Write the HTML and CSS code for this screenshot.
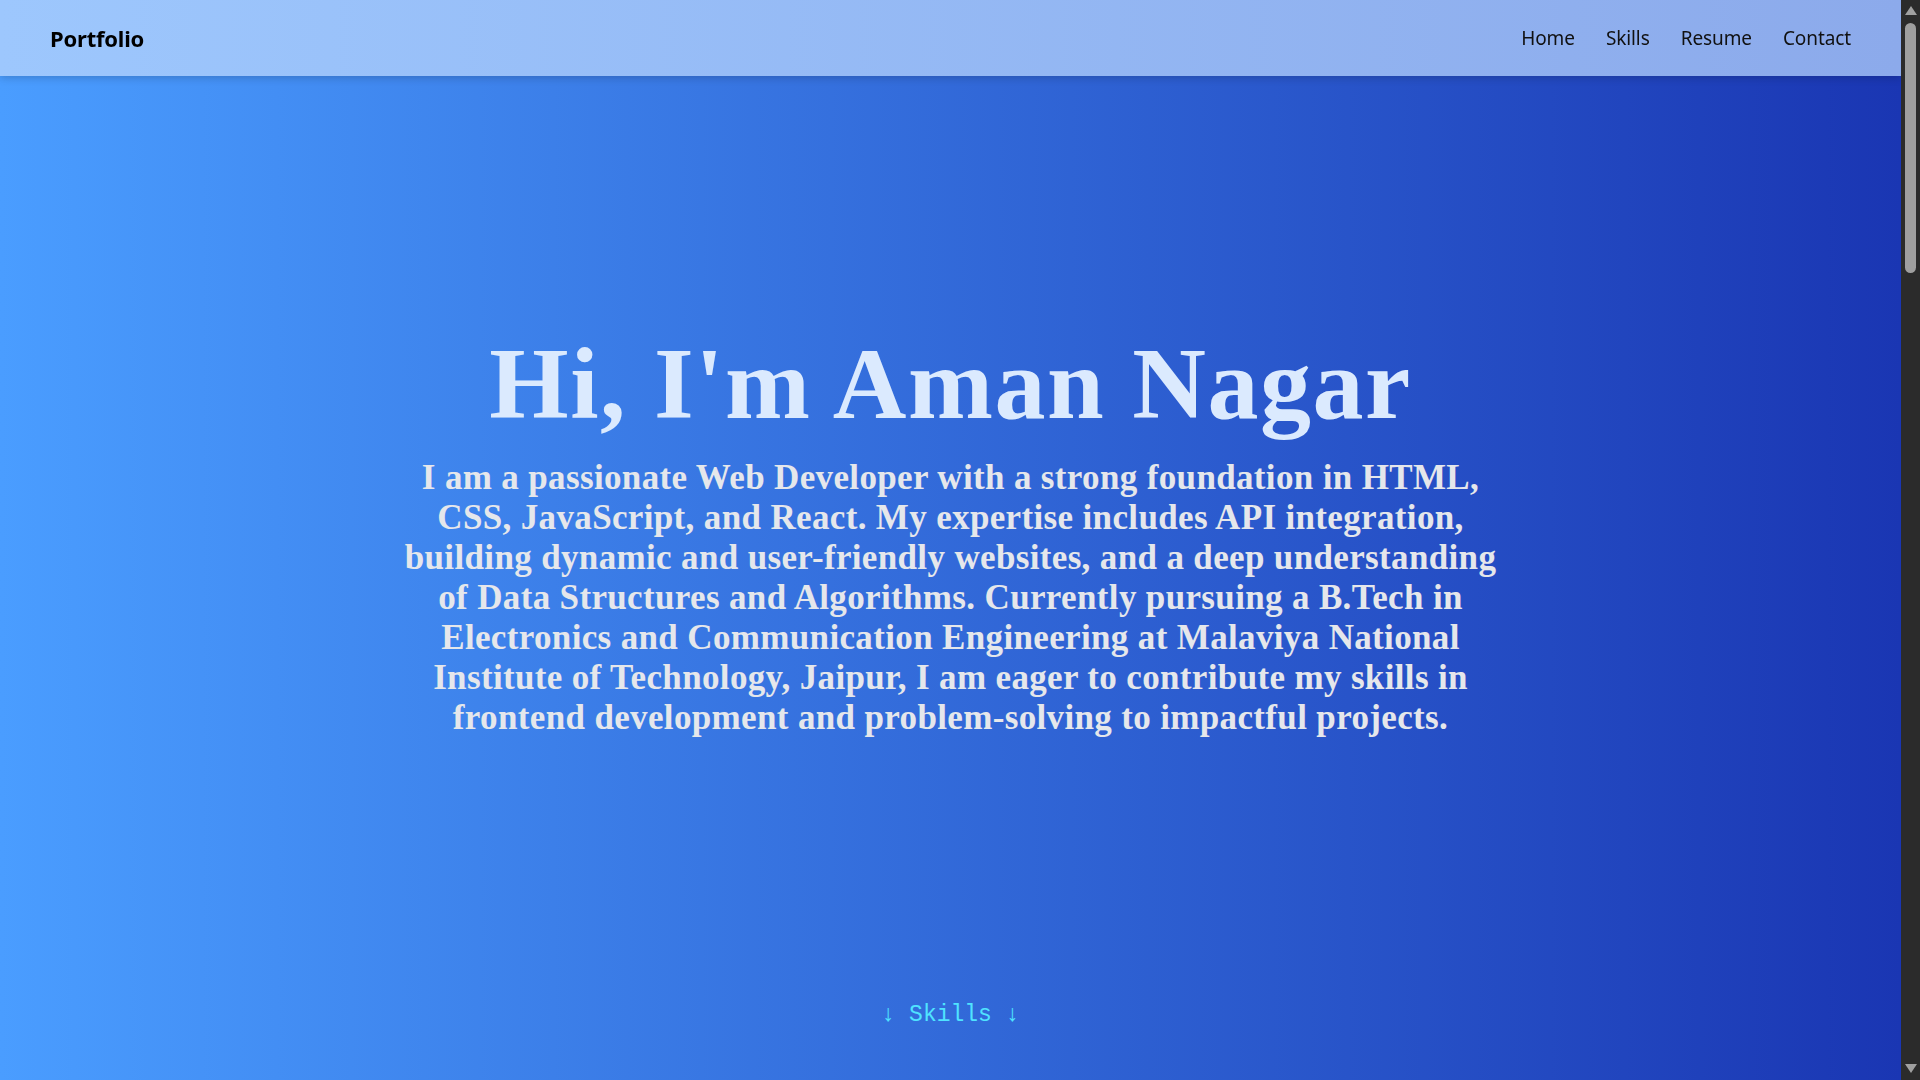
FILE: index.html
```html
<!DOCTYPE html>
<html lang="en">
<head>
<meta charset="utf-8">
<title>Portfolio</title>
<link rel="stylesheet" href="styles.css">
</head>
<body>
<header class="navbar">
  <div class="brand">Portfolio</div>
  <nav class="nav-links">
    <a href="#home">Home</a>
    <a href="#skills">Skills</a>
    <a href="#resume">Resume</a>
    <a href="#contact">Contact</a>
  </nav>
</header>
<main>
  <section class="hero" id="home">
    <div class="hero-content">
      <h1 class="hero-title">Hi, I'm Aman Nagar</h1>
      <p class="hero-text">I am a passionate Web Developer with a strong foundation in HTML,<br>
CSS, JavaScript, and React. My expertise includes API integration,<br>
building dynamic and user-friendly websites, and a deep understanding<br>
of Data Structures and Algorithms. Currently pursuing a B.Tech in<br>
Electronics and Communication Engineering at Malaviya National<br>
Institute of Technology, Jaipur, I am eager to contribute my skills in<br>
frontend development and problem-solving to impactful projects.</p>
    </div>
    <a class="next-link" href="#skills">↓ Skills ↓</a>
  </section>
  <section class="section" id="skills"></section>
  <section class="section" id="resume"></section>
  <section class="section" id="contact"></section>
</main>
<div class="scrollbar" aria-hidden="true">
  <span class="sb-up"></span>
  <span class="sb-thumb"></span>
  <span class="sb-down"></span>
</div>
</body>
</html>
```
FILE: styles.css
```css
html {
  color-scheme: dark;
  scrollbar-width: none;
}
html::-webkit-scrollbar {
  display: none;
}
* {
  box-sizing: border-box;
}
body {
  margin: 0 19px 0 0;
  font-family: "Noto Sans", "Open Sans", sans-serif;
  background: #2b2b2b;
}
.navbar {
  position: fixed;
  top: 0;
  left: 0;
  right: 19px;
  height: 76px;
  display: flex;
  align-items: center;
  justify-content: space-between;
  padding: 0 50px 0 50px;
  background: linear-gradient(to right, #9dc7fd, #8caaeb);
  box-shadow: 0 2px 8px rgba(0, 0, 0, 0.18);
  z-index: 10;
}
.brand {
  font-size: 22px;
  font-weight: 700;
  color: #000;
  letter-spacing: -0.2px;
}
.nav-links {
  display: flex;
  gap: 31px;
}
.nav-links a {
  color: #111;
  text-decoration: none;
  font-size: 19px;
  letter-spacing: -0.1px;
}
.hero {
  position: relative;
  height: 100vh;
  display: flex;
  align-items: center;
  justify-content: center;
  background: linear-gradient(to right, #4a9dff, #1a36b3);
}
.hero-content {
  max-width: 1250px;
  text-align: center;
  margin-top: -14px;
}
.hero-title {
  margin: 0;
  font-family: "Liberation Serif", "Times New Roman", serif;
  font-weight: 700;
  font-size: 102px;
  letter-spacing: 1.5px;
  line-height: 1.1;
  color: #dbeafe;
}
.hero-text {
  margin: 18px 0 0;
  font-family: "Liberation Serif", "Times New Roman", serif;
  font-weight: 700;
  font-size: 35px;
  letter-spacing: 0.35px;
  line-height: 40px;
  color: #e5e7eb;
  white-space: nowrap;
}
.next-link {
  position: absolute;
  bottom: 52px;
  left: 50%;
  transform: translateX(-50%);
  font-family: "Liberation Mono", "DejaVu Sans Mono", monospace;
  font-size: 23px;
  color: #4fe3ff;
  text-decoration: none;
  white-space: nowrap;
}
.section {
  height: 1020px;
  background: linear-gradient(to right, #4a9dff, #1a36b3);
}
.scrollbar {
  position: fixed;
  top: 0;
  right: 0;
  width: 19px;
  height: 100vh;
  background: #2b2b2b;
  z-index: 20;
}
.sb-up,
.sb-down {
  position: absolute;
  left: 4px;
  width: 0;
  height: 0;
  border-left: 6px solid transparent;
  border-right: 6px solid transparent;
}
.sb-up {
  top: 6px;
  border-bottom: 9px solid #a0a0a0;
}
.sb-down {
  bottom: 7px;
  border-top: 9px solid #a0a0a0;
}
.sb-thumb {
  position: absolute;
  top: 23px;
  left: 4px;
  width: 11px;
  height: 250px;
  border-radius: 6px;
  background: #9f9f9f;
}
```
